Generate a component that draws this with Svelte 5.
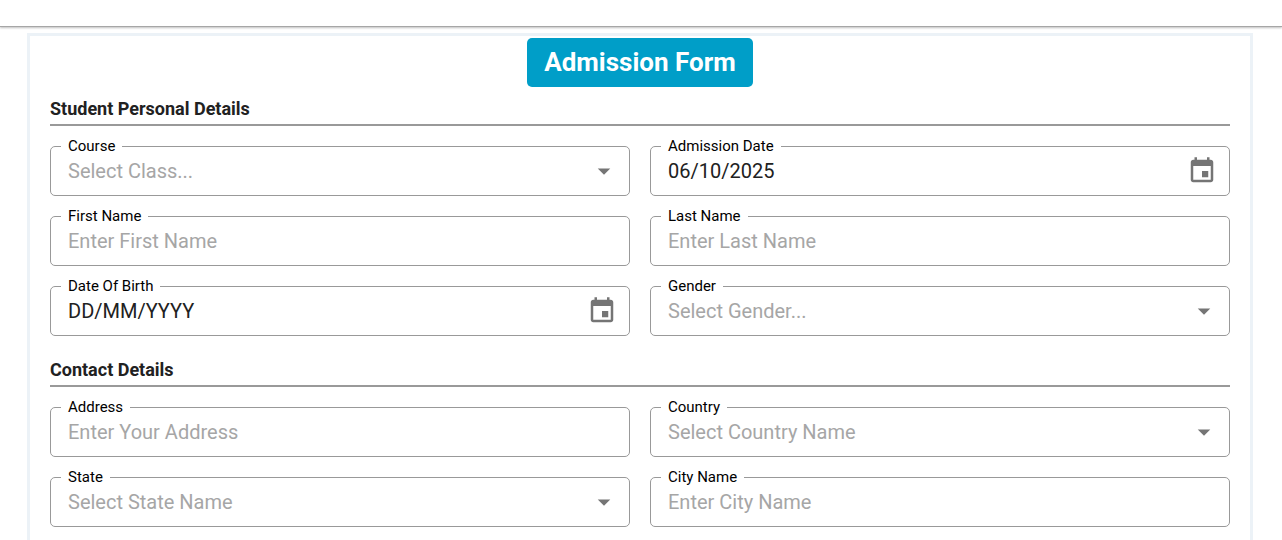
<script>
  const sections = [
    {
      title: 'Student Personal Details',
      rows: [
        [
          { id: 'course', label: 'Course', kind: 'select', text: 'Select Class...' },
          { id: 'admission-date', label: 'Admission Date', kind: 'date', value: '06/10/2025' }
        ],
        [
          { id: 'first-name', label: 'First Name', kind: 'text', text: 'Enter First Name' },
          { id: 'last-name', label: 'Last Name', kind: 'text', text: 'Enter Last Name' }
        ],
        [
          { id: 'birth-date', label: 'Date Of Birth', kind: 'date', value: 'DD/MM/YYYY' },
          { id: 'gender', label: 'Gender', kind: 'select', text: 'Select Gender...' }
        ]
      ]
    },
    {
      title: 'Contact Details',
      rows: [
        [
          { id: 'address', label: 'Address', kind: 'text', text: 'Enter Your Address' },
          { id: 'country', label: 'Country', kind: 'select', text: 'Select Country Name' }
        ],
        [
          { id: 'state', label: 'State', kind: 'select', text: 'Select State Name' },
          { id: 'city', label: 'City Name', kind: 'text', text: 'Enter City Name' }
        ]
      ]
    }
  ];
</script>

<div class="topbar"></div>
<main>
  <form class="sheet">
    <h1>Admission Form</h1>
    {#each sections as section}
      <section>
        <h2>{section.title}</h2>
        <div class="grid">
          {#each section.rows.flat() as field}
            <div class="field">
              <label for={field.id}>{field.label}</label>
              {#if field.kind === 'select'}
                <select id={field.id} required>
                  <option value="" selected disabled>{field.text}</option>
                </select>
                <svg class="arrow" viewBox="0 0 24 24" aria-hidden="true"><path d="M7 10l5 5 5-5z" /></svg>
              {:else if field.kind === 'date'}
                <input id={field.id} type="text" value={field.value} />
                <button type="button" aria-label="Choose date">
                  <svg viewBox="0 0 24 24" aria-hidden="true"><path d="M17 12h-5v5h5v-5zM16 1v2H8V1H6v2H5c-1.110 0-1.990.9-1.990 2L3 19c0 1.100.890 2 2 2h14c1.100 0 2-.9 2-2V5c0-1.100-.9-2-2-2h-1V1h-2zm3 18H5V8h14v11z" /></svg>
                </button>
              {:else}
                <input id={field.id} type="text" placeholder={field.text} />
              {/if}
            </div>
          {/each}
        </div>
      </section>
    {/each}
  </form>
</main>

<style>
  :global(html) {
    scrollbar-width: none;
  }

  :global(body) {
    background: #fff;
    color: #212121;
    font-family: Roboto, sans-serif;
  }

  .topbar {
    height: 26px;
    border-bottom: 1px solid #a6a6a6;
    box-shadow: 0 1px 2px rgba(0, 0, 0, 0.25);
  }

  main {
    padding: 6px 29px 0 27px;
  }

  .sheet {
    display: flex;
    flex-direction: column;
    padding: 2px 20px 20px;
    border: 3px solid #ecf2f7;
  }

  h1 {
    align-self: center;
    margin: 0;
    padding: 8px 17px;
    border-radius: 5px;
    background: #009ec8;
    color: #fff;
    font-size: 26px;
    line-height: 33px;
    font-weight: 700;
  }

  h2 {
    margin: 0 0 20px;
    padding: 10px 0 4px;
    border-bottom: 2px solid #999;
    font-size: 18px;
    line-height: 23px;
    font-weight: 700;
  }

  section + section {
    padding-top: 12px;
  }

  .grid {
    display: grid;
    grid-template-columns: 1fr 1fr;
    gap: 20px;
  }

  .field {
    position: relative;
    display: flex;
    align-items: center;
    height: 48px;
    border: 1px solid #999;
    border-radius: 5px;
  }

  label {
    position: absolute;
    top: -10px;
    left: 10px;
    padding: 0 7px;
    background: #fff;
    color: #000;
    font-size: 15px;
    line-height: 18px;
  }

  input,
  select {
    appearance: none;
    flex: 1;
    min-width: 0;
    height: 48px;
    margin: 0;
    padding: 0 17px;
    border: 0;
    outline: 0;
    background: transparent;
    color: #212121;
    font: 20px/24px Roboto, sans-serif;
  }

  input::placeholder,
  select:invalid {
    color: #a6a6a6;
    opacity: 1;
  }

  .arrow {
    position: absolute;
    right: 10px;
    width: 30px;
    height: 30px;
    fill: #757575;
    pointer-events: none;
  }

  button {
    display: flex;
    margin: 0 12px 0 0;
    padding: 0;
    border: 0;
    background: transparent;
  }

  button svg {
    width: 30px;
    height: 30px;
    fill: #757575;
  }
</style>
